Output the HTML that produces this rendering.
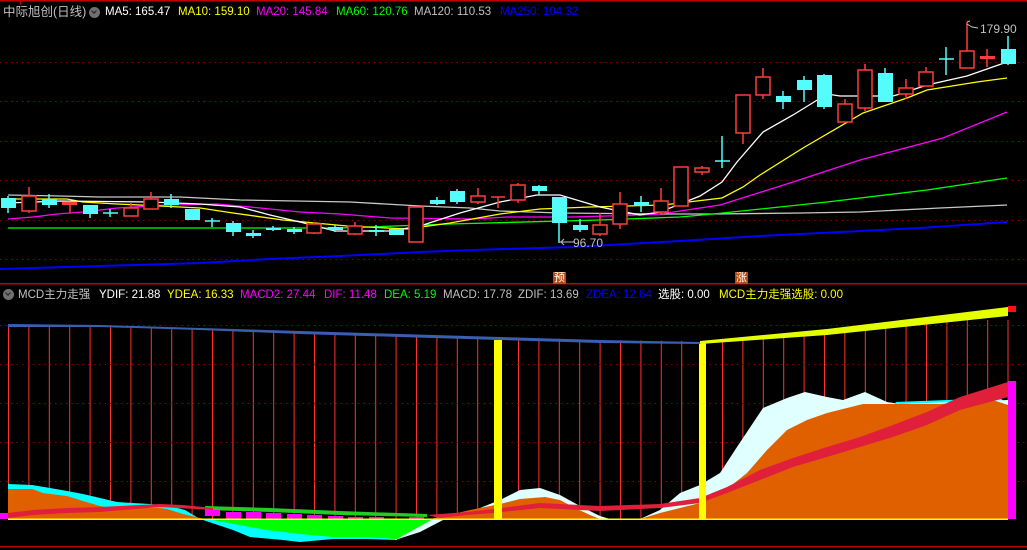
<!DOCTYPE html>
<html><head><meta charset="utf-8"><style>
html,body{margin:0;padding:0;background:#000;}
body{width:1027px;height:550px;overflow:hidden;position:relative;font-family:"Liberation Sans","Noto Sans CJK SC",sans-serif;}
.t{position:absolute;font-size:11.5px;white-space:nowrap;line-height:14px;}
.ic{position:absolute;width:11px;height:11px;border-radius:50%;background:#707070;}
.ic:after{content:"";position:absolute;left:3px;top:2px;width:3px;height:3px;border-right:1.5px solid #222;border-bottom:1.5px solid #222;transform:rotate(45deg);}
.mk{position:absolute;width:13px;height:12px;background:#b84a10;color:#fff;font-size:11px;line-height:12px;text-align:center;}
</style></head><body>
<svg width="1027" height="550" style="position:absolute;left:0;top:0" xmlns="http://www.w3.org/2000/svg">
<rect x="0" y="0" width="1027" height="1.5" fill="#c00000"/>
<rect x="20" y="0" width="1" height="5" fill="#c00000"/>
<g stroke="#8a0000" stroke-width="1" stroke-dasharray="1.5 4">
<line x1="0" y1="62.5" x2="1027" y2="62.5"/><line x1="0" y1="101.5" x2="1027" y2="101.5"/>
<line x1="0" y1="141.5" x2="1027" y2="141.5"/><line x1="0" y1="180.5" x2="1027" y2="180.5"/>
<line x1="0" y1="220.5" x2="1027" y2="220.5"/><line x1="0" y1="259.5" x2="1027" y2="259.5"/>
</g>
<!-- MA lines -->
<g fill="none" stroke-width="1.3">
<polyline stroke="#0000ff" stroke-width="2" points="0,269 33,268 100,266 200,263 270,259 340,256 420,252 473,250 573,247 680,241 760,236 840,232 920,228 1007,222"/>
<polyline stroke="#c8c8c8" points="8,195 60,196 100,197 180,197 240,200 350,202 420,206 470,208 500,211 560,213 660,214 713,214 800,213 860,212 940,208 1007,205"/>
<polyline stroke="#00ff00" points="8,228 150,228 340,228 450,224 600,220 680,217 713,214 827,202 927,190 1007,178"/>
<polyline stroke="#ff00ff" points="8,219 33,217 57,214 83,212 117,208 167,205 217,204 250,207 300,212 340,214 390,218 473,219 507,217 573,217 640,215 660,214 720,205 793,182 860,160 943,138 1007,112"/>
<polyline stroke="#ffff00" points="10,199 67,199 83,202 117,204 140,205 200,208 233,213 283,220 347,226 407,229 450,223 500,214 540,209 590,207 663,205 722,198 743,187 760,175 803,148 863,113 907,98 927,90 977,82 1007,78"/>
<polyline stroke="#ffffff" points="8,203 60,201 150,202 200,204 240,207 270,215 300,222 335,231 390,231 420,226 460,213 500,202 537,195 560,195 600,207 640,215 660,212 700,196 722,182 737,162 763,132 793,115 827,94 840,96 893,96 900,94 927,85 967,76 1007,62"/>
</g>
<g id="c"></g>
<!-- candles -->
<g stroke-width="1.5">
<!-- generated manually -->
<line x1="8" y1="196" x2="8" y2="213" stroke="#54fcfc"/><rect x="1" y="198" width="15" height="10" fill="#54fcfc"/>
<line x1="29" y1="187" x2="29" y2="213" stroke="#ff3c3c"/><rect x="22" y="196" width="14" height="15" fill="#000" stroke="#ff3c3c"/>
<line x1="49" y1="194" x2="49" y2="208" stroke="#54fcfc"/><rect x="42" y="199" width="15" height="6" fill="#54fcfc"/>
<line x1="70" y1="203" x2="70" y2="213" stroke="#ff3c3c"/><rect x="62" y="202" width="15" height="3" fill="#ff3c3c" stroke="none"/>
<line x1="90" y1="205" x2="90" y2="218" stroke="#54fcfc"/><rect x="83" y="205" width="15" height="9" fill="#54fcfc"/>
<line x1="110" y1="209" x2="110" y2="217" stroke="#54fcfc"/><line x1="103" y1="213" x2="118" y2="213" stroke="#54fcfc"/>
<line x1="131" y1="203" x2="131" y2="216" stroke="#ff3c3c"/><rect x="124" y="208" width="14" height="8" fill="#000" stroke="#ff3c3c"/>
<line x1="151" y1="192" x2="151" y2="209" stroke="#ff3c3c"/><rect x="144" y="199" width="14" height="10" fill="#000" stroke="#ff3c3c"/>
<line x1="171" y1="194" x2="171" y2="208" stroke="#54fcfc"/><rect x="164" y="199" width="15" height="6" fill="#54fcfc"/>
<rect x="185" y="209" width="15" height="11" fill="#54fcfc"/>
<line x1="212" y1="218" x2="212" y2="227" stroke="#54fcfc"/><line x1="205" y1="221" x2="220" y2="221" stroke="#54fcfc"/>
<line x1="233" y1="221" x2="233" y2="236" stroke="#54fcfc"/><rect x="226" y="223" width="15" height="9" fill="#54fcfc"/>
<line x1="253" y1="230" x2="253" y2="238" stroke="#54fcfc"/><rect x="246" y="233" width="15" height="3" fill="#54fcfc"/>
<line x1="273" y1="226" x2="273" y2="231" stroke="#54fcfc"/><rect x="266" y="228" width="15" height="2" fill="#54fcfc"/>
<line x1="294" y1="227" x2="294" y2="234" stroke="#54fcfc"/><rect x="287" y="229" width="15" height="3" fill="#54fcfc"/>
<line x1="314" y1="222" x2="314" y2="234" stroke="#ff3c3c"/><rect x="307" y="224" width="14" height="9" fill="#000" stroke="#ff3c3c"/>
<line x1="335" y1="225" x2="335" y2="232" stroke="#54fcfc"/><rect x="328" y="227" width="15" height="3" fill="#54fcfc"/>
<line x1="355" y1="222" x2="355" y2="235" stroke="#ff3c3c"/><rect x="348" y="226" width="14" height="8" fill="#000" stroke="#ff3c3c"/>
<line x1="376" y1="225" x2="376" y2="236" stroke="#54fcfc"/><rect x="369" y="230" width="15" height="2" fill="#54fcfc"/>
<rect x="389" y="229" width="15" height="6" fill="#54fcfc"/>
<rect x="409" y="207" width="14" height="35" fill="#000" stroke="#ff3c3c"/>
<line x1="437" y1="197" x2="437" y2="205" stroke="#54fcfc"/><rect x="430" y="200" width="15" height="4" fill="#54fcfc"/>
<line x1="457" y1="189" x2="457" y2="204" stroke="#54fcfc"/><rect x="450" y="191" width="15" height="11" fill="#54fcfc"/>
<line x1="478" y1="188" x2="478" y2="204" stroke="#ff3c3c"/><rect x="471" y="196" width="14" height="6" fill="#000" stroke="#ff3c3c"/>
<line x1="498" y1="197" x2="498" y2="208" stroke="#ff3c3c"/><line x1="491" y1="197" x2="505" y2="197" stroke="#ff3c3c"/>
<line x1="518" y1="183" x2="518" y2="203" stroke="#ff3c3c"/><rect x="511" y="185" width="14" height="15" fill="#000" stroke="#ff3c3c"/>
<line x1="539" y1="185" x2="539" y2="195" stroke="#54fcfc"/><rect x="532" y="186" width="15" height="5" fill="#54fcfc"/>
<line x1="559" y1="197" x2="559" y2="243" stroke="#54fcfc"/><rect x="552" y="197" width="15" height="26" fill="#54fcfc"/>
<line x1="580" y1="219" x2="580" y2="232" stroke="#54fcfc"/><rect x="573" y="225" width="15" height="5" fill="#54fcfc"/>
<line x1="600" y1="213" x2="600" y2="236" stroke="#ff3c3c"/><rect x="593" y="225" width="14" height="9" fill="#000" stroke="#ff3c3c"/>
<line x1="620" y1="192" x2="620" y2="229" stroke="#ff3c3c"/><rect x="613" y="204" width="14" height="20" fill="#000" stroke="#ff3c3c"/>
<line x1="641" y1="196" x2="641" y2="212" stroke="#54fcfc"/><rect x="634" y="202" width="15" height="4" fill="#54fcfc"/>
<line x1="661" y1="188" x2="661" y2="215" stroke="#ff3c3c"/><rect x="654" y="201" width="14" height="11" fill="#000" stroke="#ff3c3c"/>
<rect x="674" y="167" width="14" height="39" fill="#000" stroke="#ff3c3c"/>
<line x1="702" y1="166" x2="702" y2="175" stroke="#ff3c3c"/><rect x="695" y="168" width="14" height="4" fill="#000" stroke="#ff3c3c"/>
<line x1="722" y1="136" x2="722" y2="168" stroke="#54fcfc"/><line x1="715" y1="161" x2="730" y2="161" stroke="#54fcfc"/>
<line x1="743" y1="133" x2="743" y2="144" stroke="#ff3c3c"/><rect x="736" y="95" width="14" height="38" fill="#000" stroke="#ff3c3c"/>
<line x1="763" y1="68" x2="763" y2="99" stroke="#ff3c3c"/><rect x="756" y="77" width="14" height="18" fill="#000" stroke="#ff3c3c"/>
<line x1="783" y1="91" x2="783" y2="109" stroke="#54fcfc"/><rect x="776" y="96" width="15" height="6" fill="#54fcfc"/>
<line x1="804" y1="76" x2="804" y2="102" stroke="#54fcfc"/><rect x="797" y="80" width="15" height="10" fill="#54fcfc"/>
<line x1="824" y1="74" x2="824" y2="109" stroke="#54fcfc"/><rect x="817" y="75" width="15" height="32" fill="#54fcfc"/>
<line x1="845" y1="99" x2="845" y2="104" stroke="#ff3c3c"/><rect x="838" y="104" width="14" height="18" fill="#000" stroke="#ff3c3c"/>
<line x1="865" y1="64" x2="865" y2="111" stroke="#ff3c3c"/><rect x="858" y="70" width="14" height="38" fill="#000" stroke="#ff3c3c"/>
<line x1="885" y1="68" x2="885" y2="102" stroke="#54fcfc"/><rect x="878" y="73" width="15" height="29" fill="#54fcfc"/>
<line x1="906" y1="79" x2="906" y2="99" stroke="#ff3c3c"/><rect x="899" y="88" width="14" height="6" fill="#000" stroke="#ff3c3c"/>
<line x1="926" y1="67" x2="926" y2="72" stroke="#ff3c3c"/><rect x="919" y="72" width="14" height="14" fill="#000" stroke="#ff3c3c"/>
<line x1="946" y1="47" x2="946" y2="75" stroke="#54fcfc"/><line x1="939" y1="59" x2="954" y2="59" stroke="#54fcfc"/>
<line x1="967" y1="22" x2="967" y2="51" stroke="#ff3c3c"/><rect x="960" y="51" width="14" height="17" fill="#000" stroke="#ff3c3c"/>
<line x1="987" y1="49" x2="987" y2="67" stroke="#ff3c3c"/><rect x="980" y="56" width="15" height="3" fill="#ff3c3c" stroke="none"/>
<line x1="1008" y1="36" x2="1008" y2="65" stroke="#54fcfc"/><rect x="1001" y="49" width="15" height="15" fill="#54fcfc"/>
</g>
<!-- price labels -->
<g stroke="#c0c0c0" stroke-width="1" fill="none">
<polyline points="560,242 575,242"/><polyline points="564,239 561,242 564,245"/>
<polyline points="967,24 972,27 978,28"/><polyline points="967,22 970,21"/>
</g>
<text x="573" y="247" fill="#c0c0c0" font-size="12" font-family="Liberation Sans">96.70</text>
<text x="980" y="33" fill="#c0c0c0" font-size="12" font-family="Liberation Sans">179.90</text>
<rect x="0" y="283" width="1027" height="1.5" fill="#c00000"/>
<!-- indicator -->
<g stroke="#ff3030" stroke-width="1">
<line x1="8.5" y1="320" x2="8.5" y2="519"/><line x1="28.9" y1="320" x2="28.9" y2="519"/><line x1="49.3" y1="320" x2="49.3" y2="519"/><line x1="69.7" y1="320" x2="69.7" y2="519"/><line x1="90.1" y1="320" x2="90.1" y2="519"/><line x1="110.5" y1="320" x2="110.5" y2="519"/><line x1="130.9" y1="320" x2="130.9" y2="519"/><line x1="151.3" y1="320" x2="151.3" y2="519"/><line x1="171.7" y1="320" x2="171.7" y2="519"/><line x1="192.1" y1="320" x2="192.1" y2="519"/><line x1="212.5" y1="320" x2="212.5" y2="519"/><line x1="232.9" y1="320" x2="232.9" y2="519"/><line x1="253.3" y1="320" x2="253.3" y2="519"/><line x1="273.7" y1="320" x2="273.7" y2="519"/><line x1="294.1" y1="320" x2="294.1" y2="519"/><line x1="314.5" y1="320" x2="314.5" y2="519"/><line x1="334.9" y1="320" x2="334.9" y2="519"/><line x1="355.3" y1="320" x2="355.3" y2="519"/><line x1="375.7" y1="320" x2="375.7" y2="519"/><line x1="396.1" y1="320" x2="396.1" y2="519"/><line x1="416.5" y1="320" x2="416.5" y2="519"/><line x1="436.9" y1="320" x2="436.9" y2="519"/><line x1="457.3" y1="320" x2="457.3" y2="519"/><line x1="477.7" y1="320" x2="477.7" y2="519"/><line x1="518.5" y1="320" x2="518.5" y2="519"/><line x1="538.9" y1="320" x2="538.9" y2="519"/><line x1="559.3" y1="320" x2="559.3" y2="519"/><line x1="579.7" y1="320" x2="579.7" y2="519"/><line x1="600.1" y1="320" x2="600.1" y2="519"/><line x1="620.5" y1="320" x2="620.5" y2="519"/><line x1="640.9" y1="320" x2="640.9" y2="519"/><line x1="661.3" y1="320" x2="661.3" y2="519"/><line x1="681.7" y1="320" x2="681.7" y2="519"/><line x1="722.5" y1="320" x2="722.5" y2="519"/><line x1="742.9" y1="320" x2="742.9" y2="519"/><line x1="763.3" y1="320" x2="763.3" y2="519"/><line x1="783.7" y1="320" x2="783.7" y2="519"/><line x1="804.1" y1="320" x2="804.1" y2="519"/><line x1="824.5" y1="320" x2="824.5" y2="519"/><line x1="844.9" y1="320" x2="844.9" y2="519"/><line x1="865.3" y1="320" x2="865.3" y2="519"/><line x1="885.7" y1="320" x2="885.7" y2="519"/><line x1="906.1" y1="320" x2="906.1" y2="519"/><line x1="926.5" y1="320" x2="926.5" y2="519"/><line x1="946.9" y1="320" x2="946.9" y2="519"/><line x1="967.3" y1="320" x2="967.3" y2="519"/><line x1="987.7" y1="320" x2="987.7" y2="519"/><line x1="1008" y1="320" x2="1008" y2="519"/>
</g>
<polygon fill="#000" points="0,303 1027,303 1027,306 1008,307 827,329 700,341 600,340 500,337 400,334 300,331 200,328 100,325 0,324"/>
<g stroke="#8a0000" stroke-width="1" stroke-dasharray="1.5 4">
<line x1="0" y1="325.5" x2="1027" y2="325.5"/><line x1="0" y1="364.5" x2="1027" y2="364.5"/><line x1="0" y1="403.5" x2="1027" y2="403.5"/><line x1="0" y1="442.5" x2="1027" y2="442.5"/><line x1="0" y1="481.5" x2="1027" y2="481.5"/>
</g>
<polygon fill="#00ffff" points="8,519 8,484 32,485 50,488 67,491 83,494 100,498 117,502 133,503 150,504 170,506 185,510 200,519 203,520 233,530 250,537 283,540 300,542 333,539 367,539 397,540 400,519"/>
<polygon fill="#00ffff" points="895,402 1000,398 1008,404 1008,410 940,408 900,406"/>
<polygon fill="#e0ffff" points="395,519 395,540 420,532 445,519 470,512 500,500 520,490 540,488 560,495 580,506 600,516 610,519"/>
<polygon fill="#e0ffff" points="640,519 660,510 680,493 700,485 720,473 737,447 763,408 787,398 805,392 827,397 843,400 865,392 887,402 900,404 1008,400 1008,519"/>
<polygon fill="#e06000" points="8,519 8,489 32,489 43,493 67,496 83,501 100,506 110,508 160,508 167,509 183,514 200,518 205,519"/>
<polygon fill="#e06000" points="430,519 440,517 470,510 500,504 520,499 545,497 560,500 575,508 590,515 600,519"/>
<polygon fill="#e06000" points="640,519 660,513 700,503 723,492 747,473 767,450 787,430 807,420 827,413 863,404 940,404 993,400 1008,405 1008,519"/>
<polygon fill="#00ff00" points="207,519 250,527 267,530 300,534 333,537 367,537 397,539 433,519"/>
<polygon fill="#22cc22" points="205,506 270,508 340,511 427,514 427,517 340,515 270,512 205,510"/>
<g fill="#ff00ff">
<rect x="0" y="513" width="8" height="6"/>
<rect x="205" y="510" width="15" height="6"/><rect x="226" y="512" width="15" height="7"/><rect x="246" y="512" width="15" height="7"/><rect x="266" y="513" width="15" height="6"/><rect x="287" y="514" width="15" height="5"/><rect x="307" y="515" width="15" height="4"/><rect x="328" y="516" width="15" height="3"/><rect x="348" y="517" width="15" height="2"/><rect x="369" y="517" width="15" height="2"/><rect x="409" y="517" width="15" height="2"/>
<rect x="1008" y="381" width="8" height="138"/>
</g>
<polygon fill="#e0203a" points="8,513 33,510 67,508 100,507 160,504 183,505 213,508 213,510 160,507 100,512 67,513 33,515 8,518"/>
<polygon fill="#e0203a" points="427,515 467,512 493,509 540,503 600,506 660,504 700,498 727,487 760,470 793,458 827,447 860,437 893,425 927,412 960,397 1008,382 1008,397 960,410 927,425 893,437 860,447 827,457 793,467 760,480 727,493 700,503 660,508 600,511 540,508 493,513 467,515 440,518"/>
<rect x="494" y="340" width="8" height="179" fill="#ffff00"/>
<rect x="699" y="342" width="7" height="177" fill="#ffff00"/>
<rect x="8" y="518.5" width="1000" height="1.5" fill="#ffff00"/>
<polygon fill="#3a5fb0" points="8,324 100,325 200,328 300,331 400,334 500,337 600,340 700,342 700,344 600,343 500,340 400,337 300,334 200,330 100,327 8,327"/>
<polygon fill="#e4ff00" points="700,341 827,329 1008,307 1008,316 827,335 700,344"/>
<rect x="1008" y="306" width="8" height="6" fill="#ff1010"/>
<rect x="0" y="546" width="1027" height="1.5" fill="#c00000"/>
</svg>
<div class="t" style="left:3px;top:5px;color:#c0c0c0;font-size:12.5px">中际旭创(日线)</div>
<div class="ic" style="left:89px;top:7px"></div>
<div class="t" style="left:105px;top:5px;color:#fff">MA5: 165.47</div>
<div class="t" style="left:178px;top:5px;color:#ffff00">MA10: 159.10</div>
<div class="t" style="left:256px;top:5px;color:#ff00ff">MA20: 145.84</div>
<div class="t" style="left:336px;top:5px;color:#00ff00">MA60: 120.76</div>
<div class="t" style="left:414px;top:5px;color:#c0c0c0">MA120: 110.53</div>
<div class="t" style="left:500px;top:5px;color:#0000ff">MA250: 104.32</div>
<div class="mk" style="left:553px;top:272px">预</div>
<div class="mk" style="left:735px;top:272px">涨</div>
<div class="ic" style="left:3px;top:289px"></div>
<div class="t" style="left:18px;top:288px;color:#c0c0c0">MCD主力走强</div>
<div class="t" style="left:99px;top:288px;color:#fff">YDIF: 21.88</div>
<div class="t" style="left:167px;top:288px;color:#ffff00">YDEA: 16.33</div>
<div class="t" style="left:240px;top:288px;color:#ff00ff">MACD2: 27.44</div>
<div class="t" style="left:324px;top:288px;color:#ff00ff">DIF: 11.48</div>
<div class="t" style="left:384px;top:288px;color:#00ff00">DEA: 5.19</div>
<div class="t" style="left:443px;top:288px;color:#c0c0c0">MACD: 17.78</div>
<div class="t" style="left:518px;top:288px;color:#c0c0c0">ZDIF: 13.69</div>
<div class="t" style="left:586px;top:288px;color:#0000ff">ZDEA: 12.64</div>
<div class="t" style="left:658px;top:288px;color:#fff">选股: 0.00</div>
<div class="t" style="left:719px;top:288px;color:#ffff00">MCD主力走强选股: 0.00</div>
</body></html>
